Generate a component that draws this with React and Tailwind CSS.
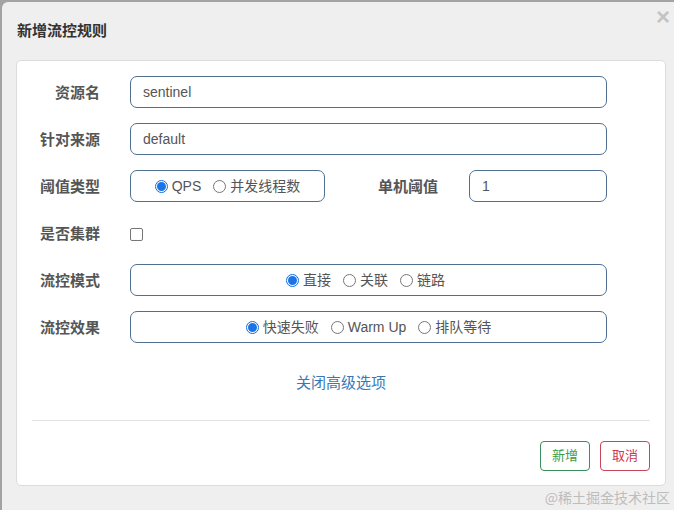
import React from 'react'

const font = { fontFamily: '"Liberation Sans", "Noto Sans CJK SC", sans-serif' }

function Radio({ checked, label }) {
  return (
    <span className="inline-flex items-center">
      {checked ? (
        <span className="w-[13px] h-[13px] rounded-full border border-[#0b6fe0] bg-white flex items-center justify-center">
          <span className="w-[9px] h-[9px] rounded-full bg-[#1a73e8]" />
        </span>
      ) : (
        <span className="w-[13px] h-[13px] rounded-full border border-[#767676] bg-white" />
      )}
      <span className="ml-[4px]">{label}</span>
    </span>
  )
}

function Row({ label, children, className = '' }) {
  return (
    <div className={`flex items-center h-[32px] ${className}`}>
      <div className="w-[83px] text-right font-bold text-[15px] text-[#555] pt-[2px]">{label}</div>
      <div className="ml-[30px] flex items-center">{children}</div>
    </div>
  )
}

const boxCls =
  'h-[32px] border border-[#4f7091] rounded-[7px] bg-white flex items-center text-[14px] text-[#555]'

export default function App() {
  return (
    <div className="w-[674px] h-[510px] bg-[#a3a3a3] pt-[2px] pl-[2px] overflow-hidden text-[14px]" style={font}>
      <div className="h-full bg-[#efefef] rounded-tl-[6px] relative">
        {/* header */}
        <div className="h-[58px] flex items-center pl-[15px]">
          <h4 className="font-bold text-[15px] text-[#333]">新增流控规则</h4>
        </div>
        <button className="absolute right-[4px] top-[3px] text-[24px] leading-none font-bold text-[#c4c4c4]">
          ×
        </button>

        {/* body card */}
        <div className="ml-[14px] w-[650px] h-[426px] bg-white border border-[#dcdcdc] rounded-[5px] flex flex-col">
          <div className="pt-[15px] flex flex-col gap-[15px]">
            <Row label="资源名">
              <div className={`${boxCls} w-[477px] px-[12px] pt-[1px]`}>sentinel</div>
            </Row>
            <Row label="针对来源">
              <div className={`${boxCls} w-[477px] px-[12px] pt-[1px]`}>default</div>
            </Row>
            <Row label="阈值类型">
              <div className={`${boxCls} w-[195px] justify-center gap-[12px]`}>
                <Radio checked label="QPS" />
                <Radio label="并发线程数" />
              </div>
              <div className="w-[113px] text-right font-bold text-[15px] text-[#555] pt-[2px]">单机阈值</div>
              <div className={`${boxCls} w-[138px] ml-[31px] px-[12px]`}>1</div>
            </Row>
            <Row label="是否集群">
              <span className="w-[13px] h-[13px] mt-[3px] border border-[#767676] rounded-[2px] bg-white" />
            </Row>
            <Row label="流控模式">
              <div className={`${boxCls} w-[477px] justify-center gap-[12px] pr-[6px]`}>
                <Radio checked label="直接" />
                <Radio label="关联" />
                <Radio label="链路" />
              </div>
            </Row>
            <Row label="流控效果">
              <div className={`${boxCls} w-[477px] justify-center gap-[12px]`}>
                <Radio checked label="快速失败" />
                <Radio label="Warm Up" />
                <Radio label="排队等待" />
              </div>
            </Row>
          </div>

          <div className="mt-[29px] text-center">
            <a className="text-[#3a78b5] text-[15px] cursor-pointer">关闭高级选项</a>
          </div>

          <div className="mx-[15px] mt-[25px] border-t border-[#e2e2e2]" />

          <div className="flex justify-end gap-[10px] pr-[15px] mt-[20px]">
            <button className="w-[50px] h-[30px] border border-[#3b8f5c] rounded-[4px] text-[#3f9a3f] text-[13px]">
              新增
            </button>
            <button className="w-[50px] h-[30px] border border-[#c8455a] rounded-[4px] text-[#d0364a] text-[13px]">
              取消
            </button>
          </div>
        </div>

        <div
          className="absolute right-[4px] top-[485px] text-[14px] text-[#bdbdbd]"
          style={{ fontFamily: '"Noto Sans CJK SC", serif' }}
        >
          @稀土掘金技术社区
        </div>
      </div>
    </div>
  )
}
